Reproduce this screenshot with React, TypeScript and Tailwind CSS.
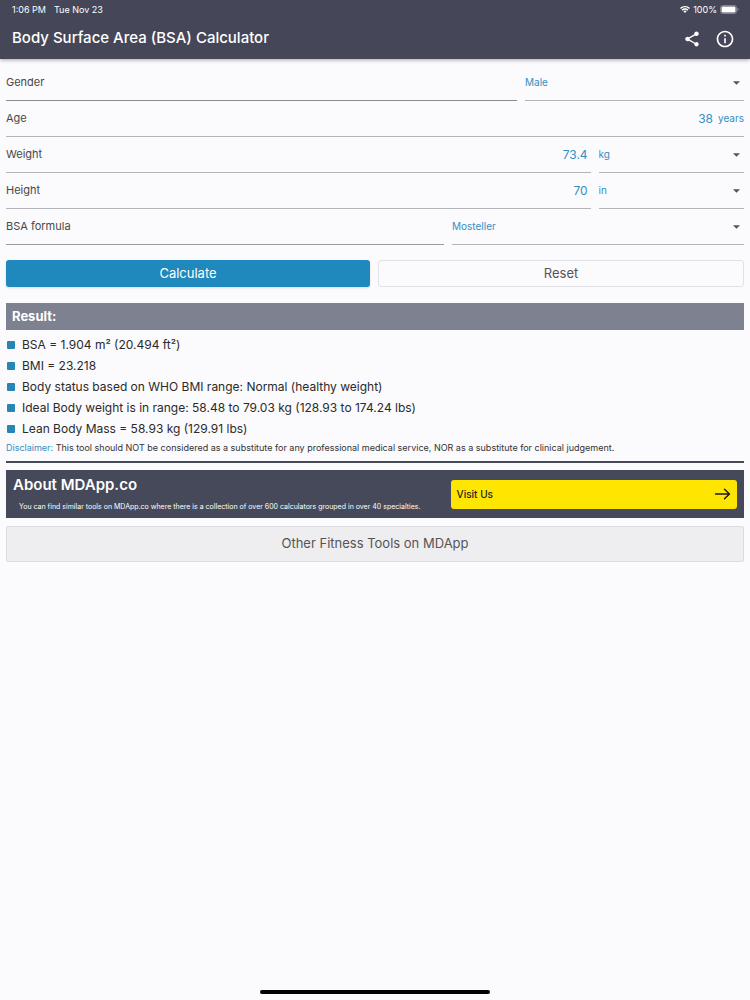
import React, { useState } from "react";
import { MdInfoOutline, MdShare } from "react-icons/md";

const results = [
  "BSA = 1.904 m² (20.494 ft²)",
  "BMI = 23.218",
  "Body status based on WHO BMI range: Normal (healthy weight)",
  "Ideal Body weight is in range: 58.48 to 79.03 kg (128.93 to 174.24 lbs)",
  "Lean Body Mass = 58.93 kg (129.91 lbs)",
];

function StatusBar() {
  return (
    <div className="flex h-[18px] items-center justify-between pr-[11px] pl-3 text-[9px] leading-none">
      <div className="flex gap-2">
        <span>1:06 PM</span>
        <span>Tue Nov 23</span>
      </div>
      <div className="flex items-center gap-[3px]">
        <svg viewBox="0 0 20 14" className="h-[7px] w-[10px]" fill="currentColor">
          <path d="M10 0C6 0 2.500 1.500 0 4l2 2c2.100-2.100 4.900-3.300 8-3.300S15.900 3.900 18 6l2-2C17.500 1.500 14 0 10 0z" />
          <path d="M10 4.700c-2.600 0-5 1-6.700 2.700l2 2C6.500 8.200 8.200 7.400 10 7.400s3.500.8 4.700 2l2-2C15 5.700 12.600 4.700 10 4.700z" />
          <path d="M10 9.200c-1.300 0-2.400.5-3.300 1.400L10 14l3.300-3.400c-.9-.9-2-1.400-3.300-1.400z" />
        </svg>
        <span>100%</span>
        <svg viewBox="0 0 38 18" className="h-[9px] w-[19px]">
          <rect x="1" y="1" width="32" height="16" rx="4" fill="none" stroke="#9a9ba6" strokeWidth="1.500" />
          <rect x="3" y="3" width="28" height="12" rx="2.500" fill="#fff" />
          <path d="M35 6c1.500.5 2 1.700 2 3s-.5 2.500-2 3z" fill="#9a9ba6" />
        </svg>
      </div>
    </div>
  );
}

function Header() {
  return (
    <header className="h-[59px] bg-[#454759] text-white shadow-[0_1px_4px_rgba(0,0,0,0.35)]">
      <StatusBar />
      <div className="flex h-[41px] items-center justify-between pr-[15px] pl-3">
        <h1 className="text-[15px] font-medium">Body Surface Area (BSA) Calculator</h1>
        <div className="flex items-center gap-[14px]">
          <button aria-label="Share">
            <MdShare className="size-[18px]" />
          </button>
          <button aria-label="Info">
            <MdInfoOutline className="size-[20px]" />
          </button>
        </div>
      </div>
    </header>
  );
}

type SelectProps = {
  id: string;
  label: string;
  options: string[];
  className: string;
};

function Select({ id, label, options, className }: SelectProps) {
  return (
    <div className={`relative flex h-9 border-b border-[#b4b4b8] ${className}`}>
      <select
        id={id}
        aria-label={label}
        className="w-full appearance-none bg-transparent text-[10px] text-[#348fbf] outline-none"
      >
        {options.map((option) => (
          <option key={option}>{option}</option>
        ))}
      </select>
      <svg viewBox="0 0 10 5" className="pointer-events-none absolute top-4 right-1 h-[4px] w-[7px]" fill="#555">
        <path d="M0 0h10L5 5z" />
      </svg>
    </div>
  );
}

type NumberFieldProps = {
  id: string;
  label: string;
  initial: string;
  className: string;
  unit?: string;
};

function NumberField({ id, label, initial, className, unit }: NumberFieldProps) {
  const [value, setValue] = useState(initial);

  return (
    <div className={`flex h-9 min-w-0 items-center border-b border-[#b4b4b8] ${className}`}>
      <label htmlFor={id} className="shrink-0">
        {label}
      </label>
      <input
        id={id}
        inputMode="decimal"
        value={value}
        onChange={(e) => setValue(e.target.value)}
        className="min-w-0 flex-1 bg-transparent text-right text-xs text-[#348fbf] outline-none"
      />
      {unit && <span className="pl-[5px] text-[10px] text-[#348fbf]">{unit}</span>}
    </div>
  );
}

function Form() {
  return (
    <form onSubmit={(e) => e.preventDefault()}>
      <div className="text-[11px] text-[#484848]">
        <div className="flex gap-2">
          <label htmlFor="gender" className="flex h-9 flex-[7] items-center border-b border-[#8a8a92]">
            Gender
          </label>
          <Select id="gender" label="Gender" options={["Male", "Female"]} className="flex-[3]" />
        </div>
        <NumberField id="age" label="Age" initial="38" unit="years" className="" />
        <div className="flex gap-2">
          <NumberField id="weight" label="Weight" initial="73.4" className="flex-[8] pr-[3px]" />
          <Select id="weight-unit" label="Weight unit" options={["kg", "lbs"]} className="flex-[2]" />
        </div>
        <div className="flex gap-2">
          <NumberField id="height" label="Height" initial="70" className="flex-[8] pr-[3px]" />
          <Select id="height-unit" label="Height unit" options={["in", "cm"]} className="flex-[2]" />
        </div>
        <div className="flex gap-2">
          <label htmlFor="formula" className="flex h-9 flex-[6] items-center border-b border-[#9a9aa0]">
            BSA formula
          </label>
          <Select
            id="formula"
            label="BSA formula"
            options={["Mosteller", "DuBois", "Haycock", "Gehan", "Boyd"]}
            className="flex-[4]"
          />
        </div>
      </div>
      <div className="mt-[15px] flex gap-2 text-[13px]">
        <button type="submit" className="h-[27px] flex-1 rounded-[3px] bg-[#1f88bc] text-white shadow-sm">
          Calculate
        </button>
        <button type="reset" className="h-[27px] flex-1 rounded-[3px] border border-[#e2e2e6] text-[#555]">
          Reset
        </button>
      </div>
    </form>
  );
}

function Results() {
  return (
    <section className="mt-4">
      <h2 className="flex h-[27px] items-center bg-[#7d8190] px-[6px] text-[13px] font-bold text-white">Result:</h2>
      <ul className="pt-1 text-xs text-[#2a2a2a]">
        {results.map((result) => (
          <li key={result} className="flex h-[21px] items-center gap-[7px] pl-px">
            <span className="size-2 rounded-[1px] bg-[#2585b5]" />
            {result}
          </li>
        ))}
      </ul>
      <p className="border-b-2 border-[#454956] pt-[2px] pb-[6px] text-[9px] leading-[14px] text-[#333]">
        <span className="text-[#348fbf]">Disclaimer:</span> This tool should NOT be considered as a substitute for any
        professional medical service, NOR as a substitute for clinical judgement.
      </p>
    </section>
  );
}

function About() {
  return (
    <section className="mt-[7px] flex h-12 items-center gap-2 bg-[#454959] text-white">
      <div className="min-w-0 flex-[6] pl-[7px]">
        <h2 className="text-[15px] leading-5 font-semibold">About MDApp.co</h2>
        <p className="pt-[6px] pl-[6px] text-[7px] leading-[12px]">
          You can find similar tools on MDApp.co where there is a collection of over 600 calculators grouped in over 40
          specialties.
        </p>
      </div>
      <div className="flex-[4] pr-[7px]">
        <a
          href="https://www.mdapp.co"
          className="flex h-[29px] items-center justify-between rounded-[3px] bg-[#ffe600] px-[6px] text-[10px] font-medium text-[#222]"
        >
          Visit Us
          <svg
            viewBox="0 0 17 12"
            className="h-3 w-[17px]"
            fill="none"
            stroke="#1c1a10"
            strokeWidth="1.400"
            strokeLinecap="round"
            strokeLinejoin="round"
          >
            <path d="M1.500 6h14M10.500 1.200L15.500 6l-5 4.800" />
          </svg>
        </a>
      </div>
    </section>
  );
}

function App() {
  return (
    <div className="flex min-h-screen flex-col bg-[#fbfafd] font-['Inter',sans-serif]">
      <Header />
      <main className="px-[6px] pt-[6px]">
        <Form />
        <Results />
        <About />
        <button className="mt-2 h-9 w-full rounded-[2px] border border-[#dcdcdf] bg-[#eeedf0] text-[13px] text-[#555]">
          Other Fitness Tools on MDApp
        </button>
      </main>
      <div className="mx-auto mt-auto mb-[6px] h-1 w-[230px] rounded-full bg-black" />
    </div>
  );
}

export default App;
